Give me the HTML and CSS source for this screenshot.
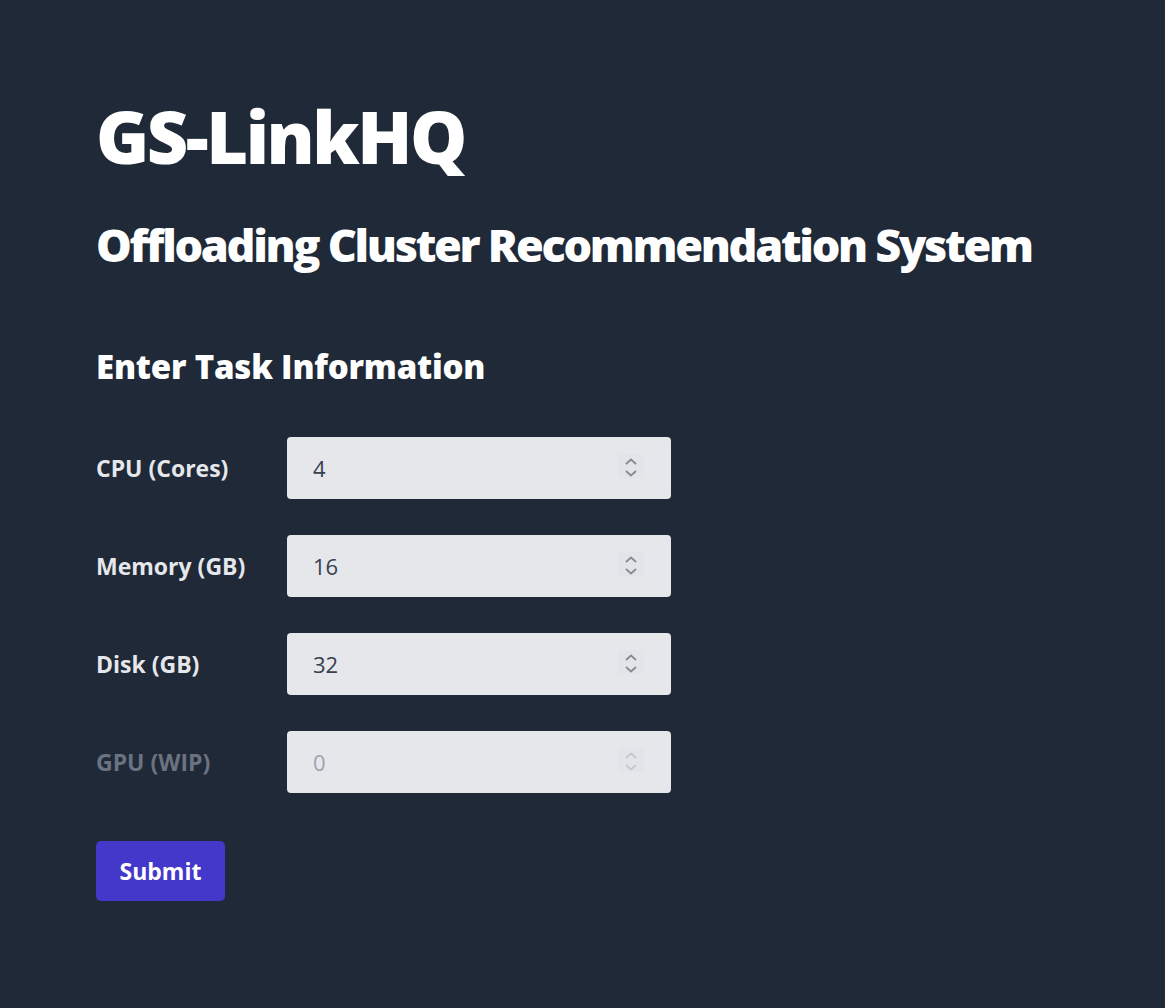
FILE: index.html
```html
<!DOCTYPE html>
<html>
<head>
<meta charset="utf-8">
<link rel="stylesheet" href="styles.css">
</head>
<body>
<main class="page">
  <h1 class="title">GS-LinkHQ</h1>
  <h2 class="subtitle">Offloading Cluster Recommendation System</h2>
  <h3 class="section">Enter Task Information</h3>
  <form class="form">
    <div class="row">
      <label class="label" for="cpu">CPU (Cores)</label>
      <div class="box">
        <input class="field" id="cpu" type="number" value="4">
        <span class="spin"><svg width="26" height="24" viewBox="0 0 26 24"><path d="M8 10 L13 5.5 L18 10 M8 17 L13 21.5 L18 17" fill="none" stroke="currentColor" stroke-width="1.8"/></svg></span>
      </div>
    </div>
    <div class="row">
      <label class="label" for="mem">Memory (GB)</label>
      <div class="box">
        <input class="field" id="mem" type="number" value="16">
        <span class="spin"><svg width="26" height="24" viewBox="0 0 26 24"><path d="M8 10 L13 5.5 L18 10 M8 17 L13 21.5 L18 17" fill="none" stroke="currentColor" stroke-width="1.8"/></svg></span>
      </div>
    </div>
    <div class="row">
      <label class="label" for="disk">Disk (GB)</label>
      <div class="box">
        <input class="field" id="disk" type="number" value="32">
        <span class="spin"><svg width="26" height="24" viewBox="0 0 26 24"><path d="M8 10 L13 5.5 L18 10 M8 17 L13 21.5 L18 17" fill="none" stroke="currentColor" stroke-width="1.8"/></svg></span>
      </div>
    </div>
    <div class="row">
      <label class="label label-disabled" for="gpu">GPU (WIP)</label>
      <div class="box box-disabled">
        <input class="field" id="gpu" type="number" value="0" disabled>
        <span class="spin"><svg width="26" height="24" viewBox="0 0 26 24"><path d="M8 10 L13 5.5 L18 10 M8 17 L13 21.5 L18 17" fill="none" stroke="currentColor" stroke-width="1.8"/></svg></span>
      </div>
    </div>
    <div class="actions">
      <button class="submit" type="button">Submit</button>
    </div>
  </form>
</main>
</body>
</html>
```
FILE: styles.css
```css
html, body {
  margin: 0;
  padding: 0;
  background: #1f2937;
  height: 100%;
}
body {
  font-family: "Open Sans", "Noto Sans", sans-serif;
  color: #ffffff;
}
.page {
  padding: 100px 96px 0 96px;
  display: flex;
  flex-direction: column;
}
.title {
  margin: 0;
  font-size: 72px;
  line-height: 1;
  font-weight: 800;
  letter-spacing: -2.5px;
}
.subtitle {
  margin: 50px 0 0 0;
  font-size: 45px;
  line-height: 1;
  font-weight: 800;
  letter-spacing: -2.3px;
}
.section {
  margin: 83px 0 0 0;
  font-size: 33px;
  line-height: 1;
  font-weight: 800;
  letter-spacing: -0.2px;
}
.form {
  margin-top: 54px;
  display: flex;
  flex-direction: column;
  gap: 36px;
}
.row {
  display: flex;
  align-items: center;
}
.label {
  width: 191px;
  font-size: 23px;
  font-weight: 700;
  color: #e5e7eb;
}
.label-disabled {
  color: #6b7280;
}
.box {
  box-sizing: border-box;
  width: 384px;
  height: 62px;
  border-radius: 4px;
  background: #e5e7eb;
  display: flex;
  align-items: center;
  padding: 0 27px 0 0;
}
.field {
  flex: 1;
  min-width: 0;
  height: 100%;
  border: none;
  background: transparent;
  color: #374151;
  font-family: "Open Sans", "Noto Sans", sans-serif;
  font-size: 22px;
  padding: 0 0 0 26px;
  outline: none;
  -moz-appearance: textfield;
}
.field::-webkit-inner-spin-button,
.field::-webkit-outer-spin-button {
  -webkit-appearance: none;
  margin: 0;
}
.field:disabled {
  color: #9ca3af;
}
.spin {
  display: flex;
  width: 26px;
  height: 24px;
  margin-bottom: 4px;
  background: #e3e4e9;
  color: #878a93;
}
.box-disabled .spin {
  color: #c5c7cc;
}
.actions {
  margin-top: 12px;
}
.submit {
  width: 129px;
  height: 60px;
  border: none;
  border-radius: 5px;
  background: #4338ca;
  color: #ffffff;
  font-family: "Open Sans", "Noto Sans", sans-serif;
  font-size: 23px;
  font-weight: 700;
  cursor: pointer;
}
```
